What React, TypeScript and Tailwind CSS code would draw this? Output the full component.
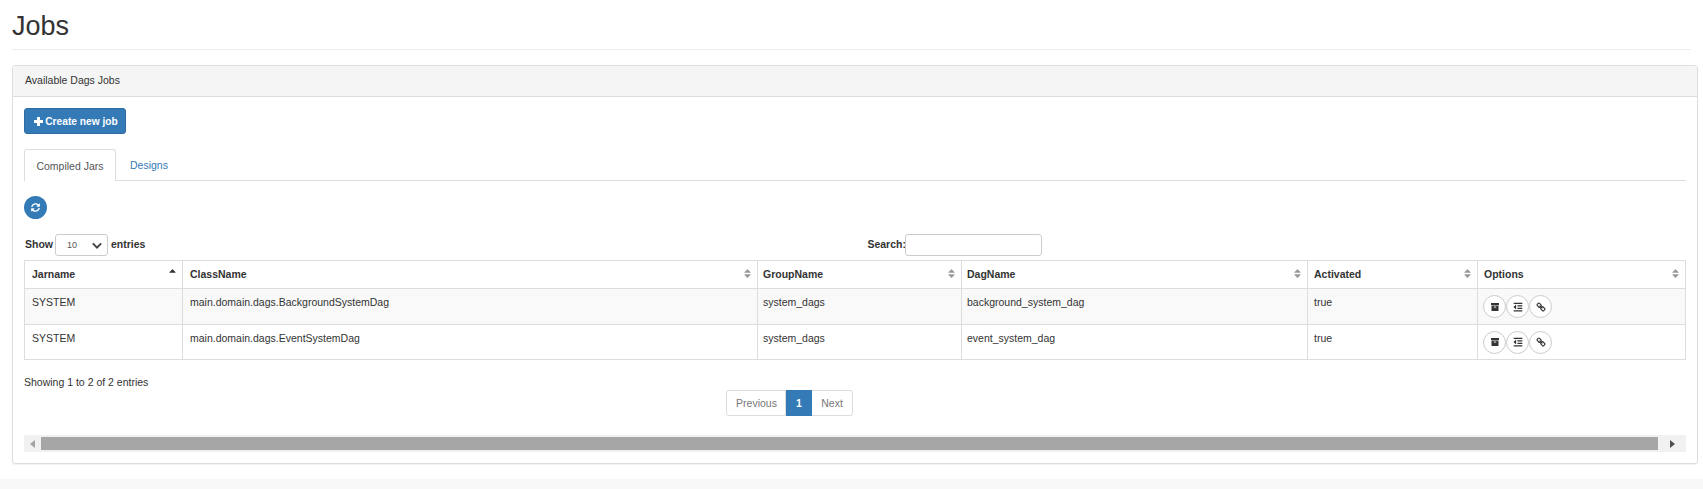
import { FaOutdent, FaSort, FaSortUp, FaSyncAlt } from "react-icons/fa";

const columns = [
  { label: "Jarname", width: "w-[158px]", pad: "pl-[7px]" },
  { label: "ClassName", width: "w-[575px]", pad: "pl-[7px]" },
  { label: "GroupName", width: "w-[204px]", pad: "pl-[5px]" },
  { label: "DagName", width: "w-[346px]", pad: "pl-[5px]" },
  { label: "Activated", width: "w-[170px]", pad: "pl-[6px]" },
  { label: "Options", width: "w-[208px]", pad: "pl-[6px]" },
];

const rows = [
  ["SYSTEM", "main.domain.dags.BackgroundSystemDag", "system_dags", "background_system_dag", "true"],
  ["SYSTEM", "main.domain.dags.EventSystemDag", "system_dags", "event_system_dag", "true"],
];

function RoundIcon({ children }: { children: React.ReactNode }) {
  return (
    <span className="flex h-[23px] w-[23px] items-center justify-center rounded-full border border-[#ccc] bg-white text-[10px] text-[#333]">
      {children}
    </span>
  );
}

function ArchiveIcon() {
  return (
    <svg viewBox="0 0 8 8" className="h-[8px] w-[8px]">
      <path d="M0 0H8V2H0ZM0.5 2.6H7.5V8H0.5Z" fill="#333" />
      <rect x="2.8" y="3.6" width="2.4" height="0.9" fill="#fff" />
    </svg>
  );
}

function ChainIcon() {
  return (
    <svg viewBox="0 0 10 10" className="h-[10px] w-[10px]" fill="none" stroke="#333" strokeWidth="1.1">
      <path d="M1.4 2.2 2.2 1.4a1 1 0 0 1 1.4 0L5 2.8a1 1 0 0 1 0 1.4L4.2 5a1 1 0 0 1-1.4 0L1.4 3.6a1 1 0 0 1 0-1.4Z" />
      <path d="M5 5.8 5.8 5a1 1 0 0 1 1.4 0L8.6 6.4a1 1 0 0 1 0 1.4L7.8 8.6a1 1 0 0 1-1.4 0L5 7.2a1 1 0 0 1 0-1.4Z" />
      <path d="M3.6 3.6 6.4 6.4" />
    </svg>
  );
}

export default function App() {
  return (
    <div className="min-h-[489px] bg-white font-['Liberation_Sans',Arial,sans-serif] text-[10.5px] leading-[15px] text-[#333]">
      <div className="h-[479px] px-3">
        <h1 className="h-[50px] border-b border-[#eee] pt-[11px] text-[27px] leading-[30px] font-normal">Jobs</h1>

        {/* Panel */}
        <div className="mt-[15px] h-[399px] w-[1686px] rounded-[3px] border border-[#ddd] shadow-[0_1px_1px_rgba(0,0,0,0.05)]">
          <div className="flex h-[31px] items-center border-b border-[#ddd] bg-[#f5f5f5] px-[12px] pb-px">
            Available Dags Jobs
          </div>

          <div className="px-[11px] pt-[11px]">
            <button className="flex h-[26px] w-[102px] items-center justify-center gap-[2px] rounded-[3px] border border-[#2e6da4] bg-[#337ab7] pl-[2px] font-bold text-white">
              <svg viewBox="0 0 9 9" className="h-[9px] w-[9px]">
                <path d="M3 0H6V3H9V6H6V9H3V6H0V3H3Z" fill="#fff" />
              </svg>
              <span className="text-[10.2px]">Create new job</span>
            </button>

            {/* Tabs */}
            <div className="mt-[15px] flex h-[32px] border-b border-[#ddd]">
              <div className="h-[32px] w-[92px] rounded-t-[3px] border border-b-0 border-[#ddd] bg-white pt-[9px] text-center text-[#555]">
                Compiled Jars
              </div>
              <div className="pt-[9px] pl-[14px] text-[#337ab7]">Designs</div>
            </div>

            <button className="mt-[15px] flex h-[23px] w-[23px] items-center justify-center rounded-full bg-[#337ab7] text-[9px] text-white">
              <FaSyncAlt />
            </button>

            {/* Length + search */}
            <div className="mt-[15px] flex h-[22px] items-center font-bold">
              <span className="mb-px ml-px">Show</span>
              <span className="ml-[2px] flex h-[22px] w-[53px] items-center justify-between rounded-[3px] border border-[#ccc] pr-[5px] pl-[11px] text-[9px] font-normal text-[#555]">
                10
                <svg viewBox="0 0 12 8" className="h-[7px] w-[10px]">
                  <path d="M1 1.5 6 6.5 11 1.5" fill="none" stroke="#444" strokeWidth="2.4" />
                </svg>
              </span>
              <span className="mb-px ml-[3px]">entries</span>
              <span className="mb-px ml-[722px]">Search:</span>
              <span className="ml-[-1px] h-[22px] w-[137px] rounded-[3px] border border-[#ccc] bg-white" />
            </div>

            {/* Table */}
            <table className="mt-[4px] w-[1662px] table-fixed border-collapse border border-[#ddd]">
              <thead>
                <tr className="h-[28px]">
                  {columns.map((col, i) => (
                    <th key={col.label} className={`${col.width} ${col.pad} relative border border-[#ddd] text-left font-bold`}>
                      {col.label}
                      <span className="absolute top-[7px] right-[4px] text-[11px] text-[#999]">
                        {i === 0 ? <FaSortUp className="text-[#333]" /> : <FaSort />}
                      </span>
                    </th>
                  ))}
                </tr>
              </thead>
              <tbody>
                {rows.map((row, r) => (
                  <tr key={r} className={r === 0 ? "h-[36px] bg-[#f9f9f9]" : "h-[35px]"}>
                    {row.map((cell, c) => (
                      <td key={c} className={`${columns[c].pad} border border-[#ddd] pt-[6px] align-top`}>
                        {cell}
                      </td>
                    ))}
                    <td className="border border-[#ddd] px-[5px] align-middle">
                      <div className="flex">
                        <RoundIcon><ArchiveIcon /></RoundIcon>
                        <RoundIcon><FaOutdent /></RoundIcon>
                        <RoundIcon><ChainIcon /></RoundIcon>
                      </div>
                    </td>
                  </tr>
                ))}
              </tbody>
            </table>

            <div className="mt-[15px] h-[15px]">Showing 1 to 2 of 2 entries</div>

            {/* Pagination */}
            <div className="ml-[702px] flex h-[26px] w-[127px]">
              <span className="flex w-[60px] items-center justify-center rounded-l-[3px] border border-[#ddd] pl-px text-[#777]">Previous</span>
              <span className="flex w-[26px] items-center justify-center bg-[#337ab7] font-bold text-white">1</span>
              <span className="flex flex-1 items-center justify-center rounded-r-[3px] border border-l-0 border-[#ddd] text-[#777]">Next</span>
            </div>

            {/* Horizontal scrollbar */}
            <div className="mt-[19px] flex h-[17px] w-[1662px] items-center bg-[#f1f1f1]">
              <span className="flex w-[17px] justify-center">
                <svg viewBox="0 0 5 8" className="h-[8px] w-[5px]"><path d="M5 0V8L0 4Z" fill="#a3a3a3" /></svg>
              </span>
              <span className="h-[13px] flex-1 bg-[#a6a6a6]" />
              <span className="flex w-[28px] justify-center">
                <svg viewBox="0 0 5 8" className="h-[8px] w-[5px]"><path d="M0 0V8L5 4Z" fill="#505050" /></svg>
              </span>
            </div>
          </div>
        </div>
      </div>
      <div className="h-[10px] bg-[#f8f8f8]" />
    </div>
  );
}
